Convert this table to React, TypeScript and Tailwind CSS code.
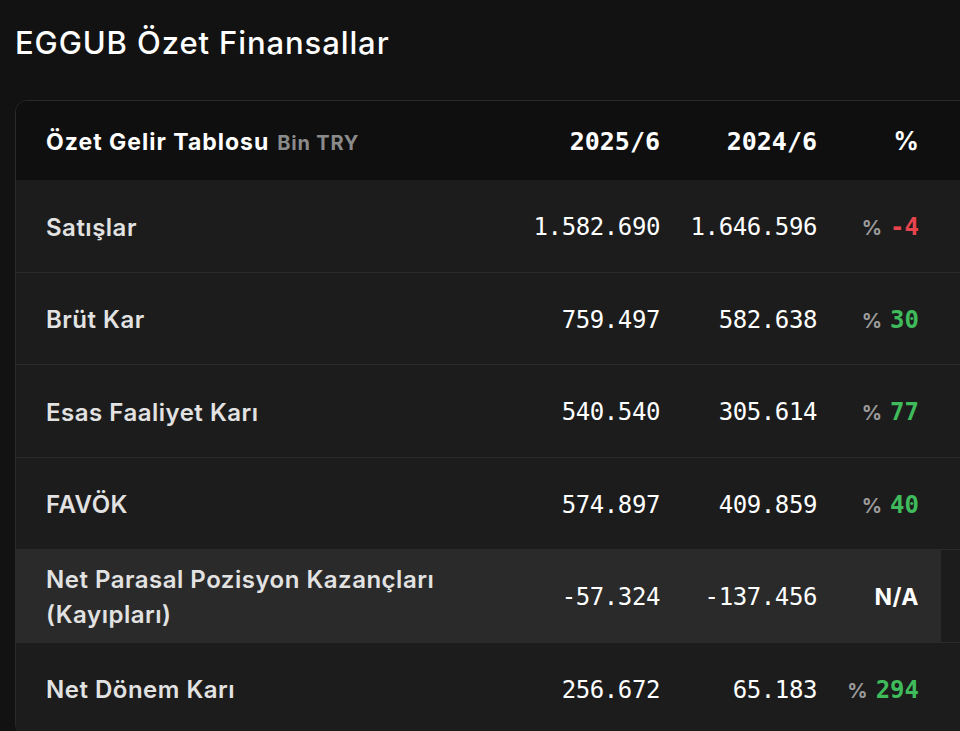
import React from 'react';

interface RowData {
    label: React.ReactNode;
    cur: string;
    prev: string;
    change: number | null;
    highlight?: boolean;
}

const rows: RowData[] = [
    { label: 'Satışlar', cur: '1.582.690', prev: '1.646.596', change: -4 },
    { label: 'Brüt Kar', cur: '759.497', prev: '582.638', change: 30 },
    { label: 'Esas Faaliyet Karı', cur: '540.540', prev: '305.614', change: 77 },
    { label: 'FAVÖK', cur: '574.897', prev: '409.859', change: 40 },
    {
        label: (
            <>
                Net Parasal Pozisyon Kazançları
                <br />
                (Kayıpları)
            </>
        ),
        cur: '-57.324',
        prev: '-137.456',
        change: null,
        highlight: true,
    },
    { label: 'Net Dönem Karı', cur: '256.672', prev: '65.183', change: 294 },
];

const sans = "font-['Inter','Noto_Sans',sans-serif]";
const mono = "font-['DejaVu_Sans_Mono',monospace]";

const Change = ({ value }: { value: number | null }) => {
    if (value === null) {
        return <span className={`${sans} text-[23px] font-bold tracking-[0.5px] text-white`}>N/A</span>;
    }
    const color = value < 0 ? 'text-[#e8444e]' : 'text-[#3fbb5b]';
    return (
        <span className="flex items-baseline gap-[8px]">
            <span className={`${sans} text-[20px] font-bold text-[#9b9b9b]`}>%</span>
            <span className={`${mono} text-[24px] font-bold ${color}`}>{value}</span>
        </span>
    );
};

const Row = ({ row }: { row: RowData }) => {
    return (
        <div className="h-[92.5px] border-b border-[#2a2a2a] bg-[#1c1c1c] flex">
            <div
                className={`flex flex-1 items-center pt-[3px] pl-[30px] ${
                    row.highlight ? 'bg-[#2a2a2a] mr-[33px] pr-[22px]' : 'pr-[55px]'
                }`}
            >
                <div className={`${sans} flex-1 text-[24px] font-semibold tracking-[0.5px] leading-[35px] text-[#e2e2e2]`}>
                    {row.label}
                </div>
                <div className={`${mono} w-[160px] text-right text-[24px] tracking-[-0.4px] text-white`}>{row.cur}</div>
                <div className={`${mono} w-[157px] text-right text-[24px] tracking-[-0.4px] text-white`}>{row.prev}</div>
                <div className="w-[102px] flex justify-end">
                    <Change value={row.change} />
                </div>
            </div>
        </div>
    );
};

const App: React.FC = () => {
    return (
        <div className="w-[960px] h-[731px] overflow-hidden bg-[#121212]">
            <h1 className={`${sans} pl-[15px] pt-[22px] text-[31px] font-medium tracking-[0.9px] text-white leading-[42px]`}>
                EGGUB Özet Finansallar
            </h1>
            <div className="ml-[15px] mt-[36px] w-[960px] rounded-[12px] border border-[#2a2a2a] overflow-hidden">
                <div className="h-[79px] bg-[#0f0f0f] flex items-center pt-[3px] pl-[30px] pr-[55px]">
                    <div className={`${sans} flex-1 flex items-baseline gap-2`}>
                        <span className="text-[23px] font-bold tracking-[1px] text-white">Özet Gelir Tablosu</span>
                        <span className="text-[20px] font-bold tracking-[0.8px] text-[#8a8a8a]">Bin TRY</span>
                    </div>
                    <div className={`${mono} w-[160px] text-right text-[25px] font-bold text-white`}>2025/6</div>
                    <div className={`${mono} w-[157px] text-right text-[25px] font-bold text-white`}>2024/6</div>
                    <div className={`${sans} w-[102px] text-right text-[25px] font-bold text-white`}>%</div>
                </div>
                {rows.map((r, i) => (
                    <Row key={i} row={r} />
                ))}
            </div>
        </div>
    );
};

export default App;
